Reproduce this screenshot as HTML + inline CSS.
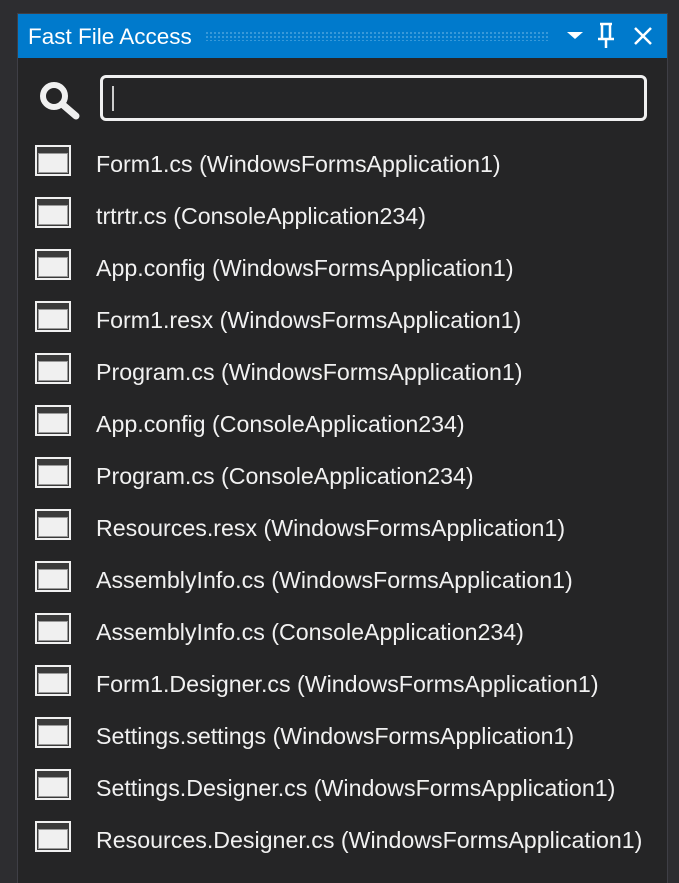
<!DOCTYPE html>
<html><head><style>
body{margin:0;width:679px;height:883px;background:#2d2d30;position:relative;overflow:hidden;font-family:"Liberation Sans","DejaVu Sans",sans-serif;}
.panel{position:absolute;left:18px;top:14px;width:649px;height:869px;background:#252526;box-shadow:0 0 0 1px #3f3f46;}
.title{position:absolute;left:0;top:0;width:649px;height:44px;background:#007acc;}
.title span{position:absolute;left:10px;top:10px;color:#fff;font-size:22.5px;}
.dots{position:absolute;left:187px;top:17px;width:345px;height:10px;background-image:radial-gradient(circle,#4aa3dd 0.8px,transparent 1px);background-size:4px 4px;}
.box{position:absolute;left:82px;top:61px;width:547px;height:46px;border:3px solid #f0f0f0;border-radius:6px;box-sizing:border-box;}
.box:after{content:"";position:absolute;left:9px;top:8px;width:2px;height:25px;background:#ccc;}
.row{position:absolute;left:0;height:40px;}
.ic{position:absolute;left:17px;top:0;width:36px;height:31px;box-sizing:border-box;border:2px solid #f0f0f0;background:#3a3a3a;padding:1px;}
.ic i{display:block;margin-top:5px;height:20px;background:#f0f0f0;border:1px solid #999;box-sizing:border-box;}
.tx{position:absolute;left:78px;top:6px;color:#f1f1f1;font-size:23.2px;white-space:nowrap;}
</style></head><body>
<div class="panel">
<div class="title"><span>Fast File Access</span><div class="dots"></div>
<svg style="position:absolute;left:545px;top:0" width="104" height="44">
<polygon points="4,18 20,18 12,25" fill="#fff"/>
<path d="M37,10h12M39,10v15M47,10v15M35,25h16M43,25v9" stroke="#fff" stroke-width="2.5" fill="none"/>
<path d="M72,14L88,30M88,14L72,30" stroke="#fff" stroke-width="2.5"/>
</svg></div>
<svg style="position:absolute;left:20px;top:67px" width="44" height="40"><circle cx="16" cy="15" r="11" stroke="#f0f0f0" stroke-width="6" fill="none"/><path d="M24,23L38,35" stroke="#f0f0f0" stroke-width="7" stroke-linecap="round"/></svg>
<div class="box"></div>
<div class="row" style="top:131px"><div class="ic"><i></i></div><div class="tx">Form1.cs (WindowsFormsApplication1)</div></div>
<div class="row" style="top:183px"><div class="ic"><i></i></div><div class="tx">trtrtr.cs (ConsoleApplication234)</div></div>
<div class="row" style="top:235px"><div class="ic"><i></i></div><div class="tx">App.config (WindowsFormsApplication1)</div></div>
<div class="row" style="top:287px"><div class="ic"><i></i></div><div class="tx">Form1.resx (WindowsFormsApplication1)</div></div>
<div class="row" style="top:339px"><div class="ic"><i></i></div><div class="tx">Program.cs (WindowsFormsApplication1)</div></div>
<div class="row" style="top:391px"><div class="ic"><i></i></div><div class="tx">App.config (ConsoleApplication234)</div></div>
<div class="row" style="top:443px"><div class="ic"><i></i></div><div class="tx">Program.cs (ConsoleApplication234)</div></div>
<div class="row" style="top:495px"><div class="ic"><i></i></div><div class="tx">Resources.resx (WindowsFormsApplication1)</div></div>
<div class="row" style="top:547px"><div class="ic"><i></i></div><div class="tx">AssemblyInfo.cs (WindowsFormsApplication1)</div></div>
<div class="row" style="top:599px"><div class="ic"><i></i></div><div class="tx">AssemblyInfo.cs (ConsoleApplication234)</div></div>
<div class="row" style="top:651px"><div class="ic"><i></i></div><div class="tx">Form1.Designer.cs (WindowsFormsApplication1)</div></div>
<div class="row" style="top:703px"><div class="ic"><i></i></div><div class="tx">Settings.settings (WindowsFormsApplication1)</div></div>
<div class="row" style="top:755px"><div class="ic"><i></i></div><div class="tx">Settings.Designer.cs (WindowsFormsApplication1)</div></div>
<div class="row" style="top:807px"><div class="ic"><i></i></div><div class="tx">Resources.Designer.cs (WindowsFormsApplication1)</div></div>
</div>
</body></html>
